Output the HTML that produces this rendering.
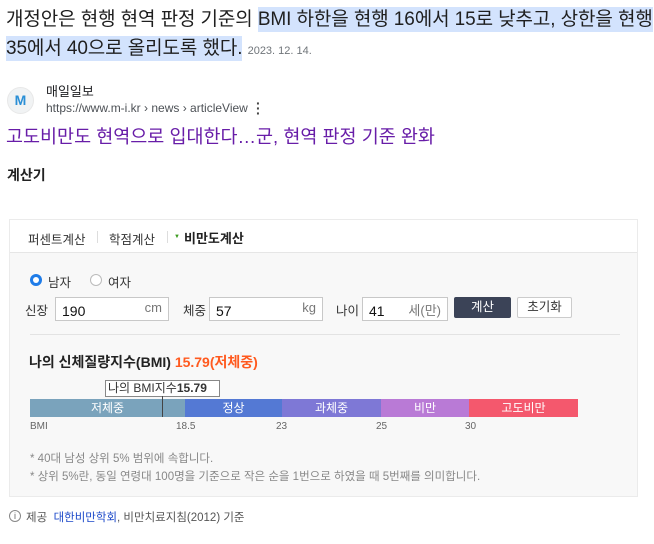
<!DOCTYPE html>
<html><head><meta charset="utf-8"><style>
*{margin:0;padding:0;box-sizing:border-box}
body{width:654px;height:544px;background:#fff;font-family:"Liberation Sans","Noto Sans CJK KR",sans-serif;position:relative;overflow:hidden;color:#202124}
.a{position:absolute;white-space:nowrap}
.hl{background:#d3e3fd;padding:2px 0}
.inp{position:absolute;height:24px;border:1px solid #c8c8c8;background:#fff;font-size:14px;color:#111;padding:5px 0 0 6px}
.inp span{position:absolute;right:6px;top:2px;color:#777;font-size:13px}
.seg{position:absolute;top:0;height:18px;color:#fff;font-size:12px;text-align:center;line-height:18px}
.t{font-size:12.5px;color:#333}
</style></head><body>
<div class="a" style="left:6px;top:5px;font-size:19px;letter-spacing:-0.1px;line-height:29px;color:#1f1f1f">개정안은 현행 현역 판정 기준의 <span class="hl">BMI 하한을 현행 16에서 15로 낮추고, 상한을 현행</span><br><span class="hl">35에서 40으로 올리도록 했다.</span> <span style="font-size:11px;color:#70757a;letter-spacing:0">2023. 12. 14.</span></div>
<div class="a" style="left:7px;top:87px;width:27px;height:27px;border-radius:50%;background:#f1f3f4;border:1px solid #e8e8e8;color:#2a8fd6;font-weight:bold;font-size:14px;text-align:center;line-height:25px">M</div>
<div class="a" style="left:46px;top:81px;font-size:13px;color:#202124">매일일보</div>
<div class="a" style="left:46px;top:101px;font-size:12px;color:#4d5156">https://www.m-i.kr › news › articleView</div>
<div class="a" style="left:256px;top:101px;font-size:14px;color:#444;line-height:5px;font-weight:bold">·<br>·<br>·</div>
<div class="a" style="left:6px;top:123px;font-size:18.5px;color:#681da8">고도비만도 현역으로 입대한다…군, 현역 판정 기준 완화</div>
<div class="a" style="left:7px;top:165px;font-size:14px;font-weight:bold;color:#222">계산기</div>

<div class="a" style="left:9px;top:219px;width:629px;height:278px;border:1px solid #ebebeb;background:#f8f8f8"></div>
<div class="a" style="left:10px;top:220px;width:627px;height:33px;background:#fff;border-bottom:1px solid #e6e6e6"></div>
<div class="a t" style="left:28px;top:229px">퍼센트계산</div>
<div class="a" style="left:97px;top:231px;width:1px;height:12px;background:#ddd"></div>
<div class="a t" style="left:109px;top:229px">학점계산</div>
<div class="a" style="left:167px;top:231px;width:1px;height:12px;background:#ddd"></div>
<div class="a" style="left:174px;top:234px;font-size:6px;color:#3a9b1e">▼</div>
<div class="a" style="left:184px;top:228px;font-size:13px;color:#222;font-weight:bold">비만도계산</div>

<div class="a" style="left:30px;top:274px;width:12px;height:12px;border-radius:50%;background:#1f7ce8"><div style="position:absolute;left:3px;top:3px;width:6px;height:6px;border-radius:50%;background:#fff"></div></div>
<div class="a t" style="left:48px;top:272px">남자</div>
<div class="a" style="left:90px;top:274px;width:12px;height:12px;border-radius:50%;border:1px solid #bbb;background:#fff"></div>
<div class="a t" style="left:108px;top:272px">여자</div>

<div class="a t" style="left:25px;top:300px">신장</div>
<div class="inp" style="left:55px;top:297px;width:114px">190<span>cm</span></div>
<div class="a t" style="left:183px;top:300px">체중</div>
<div class="inp" style="left:209px;top:297px;width:114px">57<span>kg</span></div>
<div class="a t" style="left:336px;top:300px">나이</div>
<div class="inp" style="left:362px;top:297px;width:86px">41<span>세(만)</span></div>
<div class="a" style="left:454px;top:297px;width:57px;height:21px;background:#3b4357;border-radius:2px;color:#fff;font-size:12.5px;text-align:center;line-height:21px">계산</div>
<div class="a" style="left:517px;top:297px;width:55px;height:21px;background:#fff;border:1px solid #ccc;border-radius:2px;color:#333;font-size:12.5px;text-align:center;line-height:19px">초기화</div>
<div class="a" style="left:30px;top:334px;width:590px;height:1px;background:#e3e3e3"></div>

<div class="a" style="left:29px;top:352px;font-size:14px;font-weight:bold;color:#222">나의 신체질량지수(BMI) <span style="color:#ff5a1f">15.79(저체중)</span></div>
<div class="a" style="left:105px;top:380px;width:115px;height:17px;border:1px solid #888;background:#fff;font-size:12px;color:#333;line-height:15px;padding-left:2px">나의 BMI지수<b>15.79</b></div>
<div class="a" style="left:30px;top:399px;width:548px;height:18px">
<div class="seg" style="left:0;width:155px;background:#7aa3bc">저체중</div>
<div class="seg" style="left:155px;width:97px;background:#5479d4">정상</div>
<div class="seg" style="left:252px;width:99px;background:#7e78d6">과체중</div>
<div class="seg" style="left:351px;width:88px;background:#b97ad6">비만</div>
<div class="seg" style="left:439px;width:109px;background:#f4586d">고도비만</div>
</div>
<div class="a" style="left:162px;top:396px;width:1px;height:21px;background:#444"></div>
<div class="a" style="left:30px;top:421px;font-size:10px;color:#666">BMI</div>
<div class="a" style="left:176px;top:421px;font-size:10px;color:#666">18.5</div>
<div class="a" style="left:276px;top:421px;font-size:10px;color:#666">23</div>
<div class="a" style="left:376px;top:421px;font-size:10px;color:#666">25</div>
<div class="a" style="left:465px;top:421px;font-size:10px;color:#666">30</div>
<div class="a" style="left:30px;top:450px;font-size:11.5px;color:#888">* 40대 남성 상위 5% 범위에 속합니다.</div>
<div class="a" style="left:30px;top:468px;font-size:11.5px;color:#888">* 상위 5%란, 동일 연령대 100명을 기준으로 작은 순을 1번으로 하였을 때 5번째를 의미합니다.</div>

<div class="a" style="left:9px;top:510px;width:12px;height:12px;border-radius:50%;border:1px solid #888;font-size:9px;color:#666;text-align:center;line-height:10px">i</div>
<div class="a" style="left:26px;top:509px;font-size:11.5px;color:#555">제공 &nbsp;<span style="color:#1b48c9">대한비만학회</span>, 비만치료지침(2012) 기준</div>
</body></html>
